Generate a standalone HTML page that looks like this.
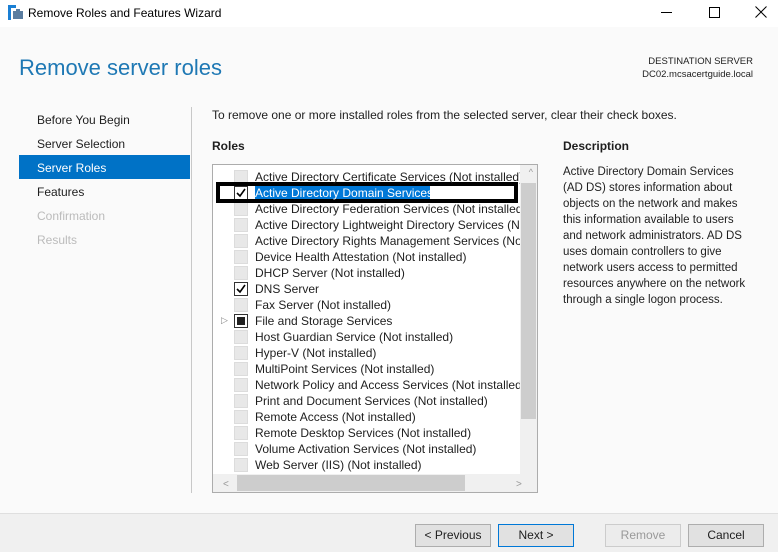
<!DOCTYPE html>
<html><head><style>
*{margin:0;padding:0;box-sizing:border-box}
body{width:778px;height:552px;overflow:hidden;background:#fafafa;font-family:"Liberation Sans",sans-serif;font-size:11.5px;color:#1e1e1e;position:relative}
.a{position:absolute;white-space:nowrap}
.cb{position:absolute;left:234px;width:14px;height:14px;background:#e8e8e8;border:1px solid #dcdcdc}
.cb.on{background:#fff;border:1px solid #333}
.row{position:absolute;left:255px;line-height:16px;font-size:12px;z-index:1;max-width:265px;overflow:hidden;white-space:nowrap}
.nav{position:absolute;left:37px;line-height:24px;font-size:12px}
.btn{position:absolute;top:524px;width:76px;height:23px;border:1px solid #adadad;background:#e1e1e1;text-align:center;line-height:21px;font-size:12px}
</style></head><body>
<div class="a" style="left:0;top:0;width:778px;height:27px;background:#fff"></div>
<svg class="a" style="left:7px;top:5px" width="16" height="16"><rect x="1" y="0" width="3" height="15" fill="#1a7fd4"/><rect x="1" y="0" width="8" height="3" fill="#1a7fd4"/><rect x="6" y="6" width="10" height="8" fill="#5a7da0"/><rect x="9" y="4" width="4" height="2" fill="#5a7da0"/></svg>
<div class="a" style="left:28px;top:6px;font-size:12px;color:#000">Remove Roles and Features Wizard</div>
<div class="a" style="left:661px;top:12px;width:11px;height:1px;background:#000"></div>
<div class="a" style="left:709px;top:7px;width:11px;height:11px;border:1px solid #000"></div>
<svg class="a" style="left:755px;top:6px" width="12" height="12"><path d="M0.5 0.5L11.5 11.5M11.5 0.5L0.5 11.5" stroke="#000"/></svg>

<div class="a" style="left:19px;top:55px;font-size:22px;color:#1e78b4">Remove server roles</div>
<div class="a" style="right:25px;top:55px;font-size:9.5px;text-align:right;line-height:13px">DESTINATION SERVER<br>DC02.mcsacertguide.local</div>

<div class="nav" style="top:108px">Before You Begin</div>
<div class="nav" style="top:132px">Server Selection</div>
<div class="a" style="left:19px;top:155px;width:171px;height:24px;background:#0072c6"></div>
<div class="nav" style="top:156px;color:#fff">Server Roles</div>
<div class="nav" style="top:180px">Features</div>
<div class="nav" style="top:204px;color:#bbb">Confirmation</div>
<div class="nav" style="top:228px;color:#bbb">Results</div>
<div class="a" style="left:191px;top:107px;width:1px;height:386px;background:#c8c8c8"></div>

<div class="a" style="left:212px;top:108px;font-size:12px">To remove one or more installed roles from the selected server, clear their check boxes.</div>
<div class="a" style="left:212px;top:139px;font-weight:bold;font-size:12px">Roles</div>
<div class="a" style="left:563px;top:139px;font-weight:bold;font-size:12px">Description</div>
<div class="a" style="left:563px;top:164px;width:192px;white-space:normal;line-height:16px">Active Directory Domain Services (AD DS) stores information about objects on the network and makes this information available to users and network administrators. AD DS uses domain controllers to give network users access to permitted resources anywhere on the network through a single logon process.</div>

<div class="a" style="left:212px;top:164px;width:326px;height:329px;border:1px solid #acacac;background:#fff;overflow:hidden">
<div class="a" style="right:0;top:0;width:17px;height:310px;background:#f0f0f0"></div>
<div class="a" style="right:1px;top:18px;width:15px;height:236px;background:#cdcdcd"></div>
<div class="a" style="left:0;bottom:0;width:324px;height:18px;background:#f0f0f0"></div>
<div class="a" style="left:24px;bottom:1px;width:228px;height:16px;background:#cdcdcd"></div>
<div class="a" style="right:4px;top:2px;font-size:9px;color:#999">^</div>
<div class="a" style="left:10px;bottom:2px;font-size:10px;color:#999">&lt;</div>
<div class="a" style="left:303px;bottom:2px;font-size:10px;color:#999">&gt;</div>
</div>

<div id="rows"></div>
<div class="a" style="left:255px;top:185px;width:175px;height:14px;background:#0078d7"></div>
<div class="a" style="left:216px;top:182px;width:302px;height:21px;border:4px solid #000"></div>

<div class="a" style="left:0;top:513px;width:778px;height:39px;background:#f0f0f0;border-top:1px solid #dfdfdf"></div>
<div class="btn" style="left:415px">&lt; Previous</div>
<div class="btn" style="left:498px;border-color:#0078d7">Next &gt;</div>
<div class="btn" style="left:605px;color:#999;border-color:#ccc;background:#ececec">Remove</div>
<div class="btn" style="left:688px">Cancel</div>

<script>
var r=[["Active Directory Certificate Services (Not installed)",0],["Active Directory Domain Services",1],["Active Directory Federation Services (Not installed)",0],["Active Directory Lightweight Directory Services (No",0],["Active Directory Rights Management Services (Not",0],["Device Health Attestation (Not installed)",0],["DHCP Server (Not installed)",0],["DNS Server",1],["Fax Server (Not installed)",0],["File and Storage Services",2],["Host Guardian Service (Not installed)",0],["Hyper-V (Not installed)",0],["MultiPoint Services (Not installed)",0],["Network Policy and Access Services (Not installed)",0],["Print and Document Services (Not installed)",0],["Remote Access (Not installed)",0],["Remote Desktop Services (Not installed)",0],["Volume Activation Services (Not installed)",0],["Web Server (IIS) (Not installed)",0]];
var h="";
r.forEach(function(x,i){var y=169+i*16;
h+='<div class="cb'+(x[1]?' on':'')+'" style="top:'+(y+1)+'px">'+(x[1]==1?'<svg width="12" height="12" style="position:absolute;left:0;top:0"><path d="M2 6L5 9L10 2" stroke="#000" stroke-width="1.6" fill="none"/></svg>':'')+(x[1]==2?'<div style="position:absolute;left:2px;top:2px;width:8px;height:8px;background:#222"></div>':'')+'</div>';
if(x[1]==2)h+='<div class="a" style="left:221px;top:'+(y+2)+'px;font-size:9px;color:#888">&#9655;</div>';
h+='<div class="row" style="top:'+y+'px;'+(i==1?'color:#fff;z-index:2':'')+'">'+x[0]+'</div>';});
document.getElementById('rows').innerHTML=h;
</script>
</body></html>
